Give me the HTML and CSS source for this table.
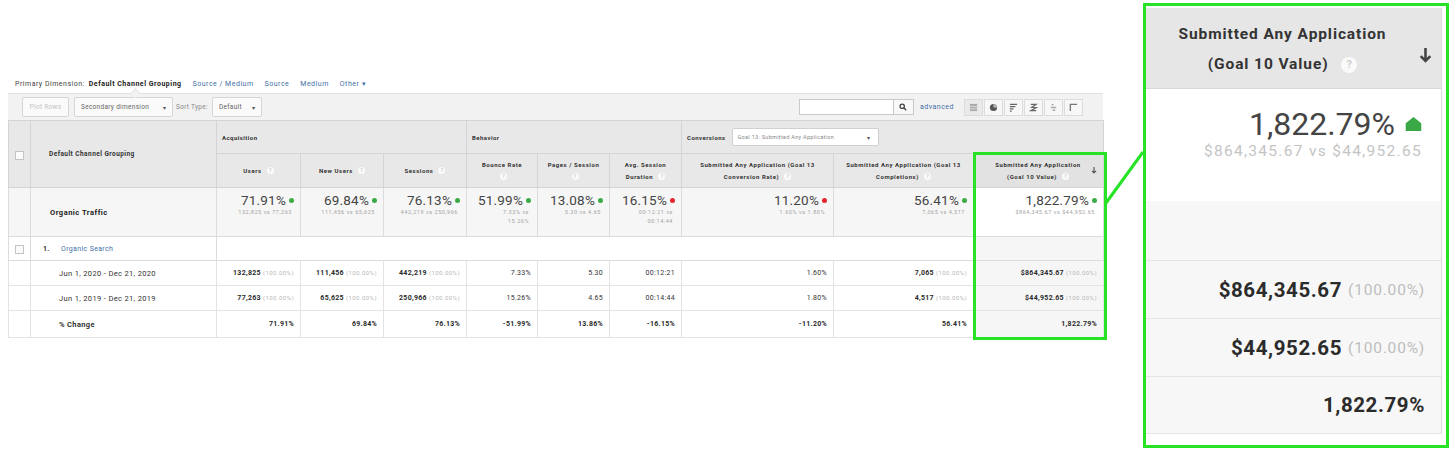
FILE: index.html
```html
<!DOCTYPE html>
<html lang="en">
<head>
<meta charset="utf-8">
<title>Report</title>
<link rel="stylesheet" href="styles.css">
</head>
<body>
<div class="stage">
  <div class="ga">
    <div class="dimbar">
      <span class="lbl">Primary Dimension:</span>
      <b class="cur">Default Channel Grouping</b>
      <a>Source / Medium</a>
      <a>Source</a>
      <a>Medium</a>
      <a>Other ▾</a>
    </div>
    <div class="toolbar">
      <span class="btn dis">Plot Rows</span>
      <span class="btn sec">Secondary dimension <i class="car">▾</i></span>
      <span class="sortlbl">Sort Type:</span>
      <span class="btn def">Default <i class="car">▾</i></span>
      <span class="spacer"></span>
      <span class="search"></span>
      <span class="sbtn"><svg viewBox="0 0 10 10" width="8" height="8"><circle cx="4" cy="4" r="2.7" fill="none" stroke="#444" stroke-width="1.6"/><path d="M6 6l3 3" stroke="#444" stroke-width="1.8"/></svg></span>
      <a class="adv">advanced</a>
      <span class="views">
        <span class="v on"><svg viewBox="0 0 10 10" width="9" height="9"><rect x="1" y="1" width="8" height="8" fill="#aaa"/><path d="M1 4h8M1 6.5h8" stroke="#eee" stroke-width=".8"/></svg></span>
        <span class="v"><svg viewBox="0 0 10 10" width="9" height="9"><circle cx="5" cy="5" r="4" fill="#555"/><path d="M5 5V1A4 4 0 0 1 9 5Z" fill="#bbb"/></svg></span>
        <span class="v"><svg viewBox="0 0 10 10" width="9" height="9"><path d="M1 1.5h8M1 4h6M1 6.5h4M1 9h2" stroke="#666" stroke-width="1.6"/></svg></span>
        <span class="v"><svg viewBox="0 0 10 10" width="9" height="9"><path d="M2 1.5h6L3 5h5L2 8.5h6" stroke="#666" stroke-width="1.3" fill="none"/></svg></span>
        <span class="v"><svg viewBox="0 0 10 10" width="9" height="9"><path d="M3 2h2M2 5h6M4 8h3" stroke="#aaa" stroke-width="1.6"/></svg></span>
        <span class="v"><svg viewBox="0 0 10 10" width="9" height="9"><path d="M1 1.5h8M1.5 1v8" stroke="#777" stroke-width="1.5"/></svg></span>
      </span>
    </div>
    <table class="report">
      <colgroup>
        <col class="w-cb"><col class="w-dim"><col class="w-84"><col class="w-83"><col class="w-83"><col class="w-71"><col class="w-72"><col class="w-72"><col class="w-152"><col class="w-140"><col class="w-130">
      </colgroup>
      <thead>
        <tr class="h1">
          <th class="cb" rowspan="2"><span class="chk"></span></th>
          <th class="dimh" rowspan="2">Default Channel Grouping</th>
          <th class="grp" colspan="3">Acquisition</th>
          <th class="grp" colspan="3">Behavior</th>
          <th class="grp conv" colspan="3"><div class="convwrap"><span>Conversions</span><span class="goalsel">Goal 13: Submitted Any Application<i class="car">▾</i></span></div></th>
        </tr>
        <tr class="h2">
          <th class="mh">Users <span class="help">?</span></th>
          <th class="mh">New Users <span class="help">?</span></th>
          <th class="mh">Sessions <span class="help">?</span></th>
          <th class="mh">Bounce Rate<br><span class="help">?</span></th>
          <th class="mh">Pages / Session<br><span class="help">?</span></th>
          <th class="mh">Avg. Session<br>Duration <span class="help">?</span></th>
          <th class="mh">Submitted Any Application (Goal 13<br>Conversion Rate) <span class="help">?</span></th>
          <th class="mh">Submitted Any Application (Goal 13<br>Completions) <span class="help">?</span></th>
          <th class="mh srt"><div class="srtwrap"><span>Submitted Any Application<br>(Goal 10 Value) <span class="help">?</span></span><svg class="sarr" viewBox="0 0 10 12" width="6" height="7"><path d="M5 0v10M1.5 6.5L5 10l3.5-3.5" stroke="#555" stroke-width="2" fill="none"/></svg></div></th>
        </tr>
      </thead>
      <tbody>
        <tr class="tot">
          <td class="cb"></td>
          <td class="tname">Organic Traffic</td>
          <td class="num"><div class="big">71.91%<span class="dot g"></span></div><div class="sub">132,825 vs 77,263</div></td>
          <td class="num"><div class="big">69.84%<span class="dot g"></span></div><div class="sub">111,456 vs 65,625</div></td>
          <td class="num"><div class="big">76.13%<span class="dot g"></span></div><div class="sub">442,219 vs 250,966</div></td>
          <td class="num"><div class="big">51.99%<span class="dot g"></span></div><div class="sub">7.33% vs<br>15.26%</div></td>
          <td class="num"><div class="big">13.08%<span class="dot g"></span></div><div class="sub">5.30 vs 4.65</div></td>
          <td class="num"><div class="big">16.15%<span class="dot r"></span></div><div class="sub">00:12:21 vs<br>00:14:44</div></td>
          <td class="num"><div class="big">11.20%<span class="dot r"></span></div><div class="sub">1.60% vs 1.80%</div></td>
          <td class="num"><div class="big">56.41%<span class="dot g"></span></div><div class="sub">7,065 vs 4,517</div></td>
          <td class="num srt"><div class="big">1,822.79%<span class="dot g"></span></div><div class="sub">$864,345.67 vs $44,952.65</div></td>
        </tr>
        <tr class="grprow">
          <td class="cb"><span class="chk"></span></td>
          <td class="gname"><span class="idx">1.</span><a>Organic Search</a></td>
          <td class="blank" colspan="8"></td>
          <td class="srt"></td>
        </tr>
        <tr class="drow">
          <td class="cb"></td>
          <td class="date">Jun 1, 2020 - Dec 21, 2020</td>
          <td class="val"><b>132,825</b> <span class="pc">(100.00%)</span></td>
          <td class="val"><b>111,456</b> <span class="pc">(100.00%)</span></td>
          <td class="val"><b>442,219</b> <span class="pc">(100.00%)</span></td>
          <td class="val">7.33%</td>
          <td class="val">5.30</td>
          <td class="val">00:12:21</td>
          <td class="val">1.60%</td>
          <td class="val"><b>7,065</b> <span class="pc">(100.00%)</span></td>
          <td class="val srt"><b>$864,345.67</b> <span class="pc">(100.00%)</span></td>
        </tr>
        <tr class="drow">
          <td class="cb"></td>
          <td class="date">Jun 1, 2019 - Dec 21, 2019</td>
          <td class="val"><b>77,263</b> <span class="pc">(100.00%)</span></td>
          <td class="val"><b>65,625</b> <span class="pc">(100.00%)</span></td>
          <td class="val"><b>250,966</b> <span class="pc">(100.00%)</span></td>
          <td class="val">15.26%</td>
          <td class="val">4.65</td>
          <td class="val">00:14:44</td>
          <td class="val">1.80%</td>
          <td class="val"><b>4,517</b> <span class="pc">(100.00%)</span></td>
          <td class="val srt"><b>$44,952.65</b> <span class="pc">(100.00%)</span></td>
        </tr>
        <tr class="drow last">
          <td class="cb"></td>
          <td class="date chg">% Change</td>
          <td class="val"><b>71.91%</b></td>
          <td class="val"><b>69.84%</b></td>
          <td class="val"><b>76.13%</b></td>
          <td class="val"><b>-51.99%</b></td>
          <td class="val"><b>13.86%</b></td>
          <td class="val"><b>-16.15%</b></td>
          <td class="val"><b>-11.20%</b></td>
          <td class="val"><b>56.41%</b></td>
          <td class="val srt"><b>1,822.79%</b></td>
        </tr>
      </tbody>
    </table>
  </div>

  <div class="zoombox">
    <div class="zcol">
      <div class="zhead">
        <div class="zlabel">Submitted Any Application<br>(Goal 10 Value) <span class="zhelp">?</span></div>
        <svg class="zarrow" viewBox="0 0 12 14" width="13" height="15"><path d="M6 0v12M1.5 7.5L6 12l4.5-4.5" stroke="#444" stroke-width="2.4" fill="none"/></svg>
      </div>
      <div class="ztot">
        <div class="zbig">1,822.79%<svg class="zup" viewBox="0 0 10 9" width="17" height="14"><path d="M5 0L10 4V9H0V4Z" fill="#3aa845"/></svg></div>
        <div class="zsub">$864,345.67 vs $44,952.65</div>
      </div>
      <div class="zrow zempty"></div>
      <div class="zrow"><b>$864,345.67</b> <span class="zpc">(100.00%)</span></div>
      <div class="zrow"><b>$44,952.65</b> <span class="zpc">(100.00%)</span></div>
      <div class="zrow"><b>1,822.79%</b></div>
    </div>
  </div>

  <svg class="annot" viewBox="0 0 1454 452" width="1454" height="452">
    <rect x="974.5" y="153.5" width="131" height="185" fill="none" stroke="#26e326" stroke-width="3"/>
    <path d="M1106 203L1143 152" stroke="#26e326" stroke-width="3"/>
  </svg>
</div>
</body>
</html>
```

FILE: styles.css
```css
* { box-sizing: border-box; }
html, body { margin: 0; padding: 0; background: #fff; }
body {
  width: 1454px;
  height: 452px;
  overflow: hidden;
  font-family: Roboto, "Liberation Sans", Arial, sans-serif;
  color: #333;
}
a { color: #3f6fa6; text-decoration: none; }

.stage {
  position: relative;
  display: flex;
  align-items: flex-start;
  height: 452px;
}

/* ---------- Analytics panel ---------- */
.ga {
  width: 1095px;
  margin: 75px 0 0 8px;
  flex: none;
}

.dimbar {
  height: 18px;
  display: flex;
  align-items: center;
  gap: 11px;
  padding-left: 7px;
  font-size: 7px;
  letter-spacing: .5px;
  white-space: nowrap;
}
.dimbar .lbl { color: #444; margin-right: -7px; }
.dimbar .cur { color: #222; font-weight: 700; letter-spacing: .5px; }

.toolbar {
  position: relative;
  height: 27px;
  background: #f2f2f2;
  border-top: 1px solid #e2e2e2;
  display: flex;
  align-items: center;
  padding: 0 20px 0 14px;
  font-size: 6.5px;
  letter-spacing: .3px;
  color: #666;
}
.toolbar::before {
  content: "";
  position: absolute;
  top: -4px;
  left: 124px;
  width: 6px;
  height: 6px;
  background: #f2f2f2;
  border-top: 1px solid #e2e2e2;
  border-left: 1px solid #e2e2e2;
  transform: rotate(45deg);
}
.btn {
  height: 20px;
  display: flex;
  align-items: center;
  border: 1px solid #d6d6d6;
  border-radius: 2px;
  background: #fafafa;
  padding: 0 6px;
  white-space: nowrap;
}
.btn.dis { width: 47px; color: #c4c4c4; justify-content: center; }
.btn.sec { width: 99px; margin-left: 5px; justify-content: space-between; }
.btn.def { width: 50px; margin-left: 4px; justify-content: space-between; }
.car { font-style: normal; font-size: 6px; color: #555; }
.sortlbl { margin-left: 3px; color: #888; }
.spacer { flex: 1; }
.search {
  width: 95px;
  height: 16px;
  background: #fff;
  border: 1px solid #c9c9c9;
}
.sbtn {
  width: 20px;
  height: 16px;
  border: 1px solid #c9c9c9;
  border-left: none;
  background: #f8f8f8;
  display: flex;
  align-items: center;
  justify-content: center;
}
.adv { margin-left: 6px; font-size: 7px; letter-spacing: .5px; }
.views {
  display: flex;
  margin-left: 10px;
  gap: 1px;
}
.v {
  width: 19px;
  height: 17px;
  display: flex;
  align-items: center;
  justify-content: center;
  background: #f7f7f7;
  border: 1px solid #dcdcdc;
}
.v.on { background: #eaeaea; }

/* ---------- Table ---------- */
.report {
  width: 1095px;
  border-collapse: collapse;
  table-layout: fixed;
}
.w-cb { width: 22px; }
.w-dim { width: 186px; }
.w-84 { width: 84px; }
.w-83 { width: 83px; }
.w-71 { width: 71px; }
.w-72 { width: 72px; }
.w-152 { width: 152px; }
.w-140 { width: 140px; }
.w-130 { width: 130px; }

.report th, .report td {
  border: 1px solid #dcdcdc;
  padding: 0;
}
.report thead th {
  background: #e8e8e8;
  color: #333;
  font-weight: 700;
  border-color: #d4d4d4;
}
.h1 th { height: 33px; }
.h2 th { height: 34px; }
.cb { text-align: center; }
.chk {
  display: inline-block;
  width: 9px;
  height: 9px;
  border: 1px solid #c4c4c4;
  background: #fbfbfb;
  vertical-align: middle;
}
.dimh {
  text-align: left;
  padding-left: 18px !important;
  font-size: 6.5px;
  letter-spacing: .45px;
}
.grp {
  text-align: left;
  padding-left: 5px !important;
  font-size: 6px;
  letter-spacing: .45px;
}
.convwrap { display: flex; align-items: center; gap: 6px; }
.goalsel {
  width: 147px;
  height: 18px;
  background: #fff;
  border: 1px solid #d0d0d0;
  border-radius: 2px;
  display: flex;
  align-items: center;
  justify-content: space-between;
  padding: 0 7px 0 5px;
  font-weight: 400;
  color: #888;
  font-size: 5.5px;
  letter-spacing: .3px;
}
.mh {
  text-align: center;
  font-size: 6px;
  letter-spacing: .55px;
  line-height: 12px;
  padding: 0 3px !important;
}
.help {
  display: inline-block;
  width: 7px;
  height: 7px;
  border-radius: 50%;
  background: #fafafa;
  color: #ccc;
  font-size: 5px;
  line-height: 7px;
  text-align: center;
  letter-spacing: 0;
  vertical-align: middle;
  margin-left: 3px;
}
.report thead th.srt { background: #e2e2e2; }
.srtwrap { display: flex; align-items: center; justify-content: space-between; padding-left: 10px; padding-right: 3px; }
.srtwrap > span { flex: 1; text-align: center; }
.sarr { flex: none; margin-left: 2px; }

/* totals */
.tot td { height: 49px; background: #f6f6f6; vertical-align: top; }
.tot td.srt { background: #fff; }
.tname {
  vertical-align: middle !important;
  padding-left: 19px !important;
  font-weight: 700;
  font-size: 7.5px;
  letter-spacing: .5px;
  color: #222;
}
.num { text-align: right; padding: 6px 6px 0 4px !important; }
.big {
  font-size: 13.5px;
  line-height: 13px;
  color: #444;
  letter-spacing: .2px;
  white-space: nowrap;
}
.dot {
  display: inline-block;
  width: 5px;
  height: 5px;
  border-radius: 50%;
  margin-left: 3px;
  vertical-align: 2px;
}
.dot.g { background: #3daa46; }
.dot.r { background: #e3262c; }
.sub {
  margin-top: 1px;
  padding-right: 2px;
  font-size: 5.5px;
  line-height: 9px;
  color: #a4a4a4;
  letter-spacing: .55px;
  white-space: nowrap;
}

/* group row */
.grprow td { height: 24px; background: #fff; }
.grprow td.blank { border-left: none; border-right: none; }
.grprow td.srt { background: #f6f6f6; border-left: none; }
.gname {
  padding-left: 12px !important;
  font-size: 7px;
  letter-spacing: .35px;
}
.idx { display: inline-block; width: 18px; color: #333; font-weight: 700; }

/* data rows */
.drow td { height: 25px; background: #fff; border-color: #e3e3e3; }
.drow.last td { height: 27px; }
.drow td.srt { background: #f6f6f6; }
.date {
  padding-left: 28px !important;
  font-size: 7.5px;
  letter-spacing: .35px;
  color: #333;
}
.chg { font-weight: 700; }
.val {
  text-align: right;
  padding-right: 6px !important;
  font-size: 7px;
  letter-spacing: .3px;
  color: #333;
  white-space: nowrap;
}
.val b { color: #2a2a2a; }
.pc { color: #b8b8b8; font-size: 6px; letter-spacing: .45px; }

/* ---------- Zoomed column ---------- */
.zoombox {
  flex: none;
  width: 306px;
  height: 445px;
  margin: 3px 0 0 40px;
  border: 3px solid #26e326;
  padding: 2px 4px 0 0;
  background: #fff;
}
.zcol {
  width: 296px;
  border-right: 1px solid #dcdcdc;
  background: #f7f7f7;
}
.zhead {
  height: 81px;
  background: #e6e6e6;
  border-bottom: 1px solid #d8d8d8;
  display: flex;
  align-items: flex-start;
  padding: 11px 9px 0 0;
}
.zlabel {
  flex: 1;
  text-align: center;
  font-weight: 700;
  font-size: 15.5px;
  line-height: 30px;
  letter-spacing: .9px;
  color: #333;
}
.zhelp {
  display: inline-block;
  width: 16px;
  height: 16px;
  border-radius: 50%;
  background: #fafafa;
  color: #cfcfcf;
  font-size: 11px;
  line-height: 16px;
  text-align: center;
  vertical-align: 1px;
  margin-left: 8px;
  letter-spacing: 0;
}
.zarrow { flex: none; margin-top: 29px; }

.ztot {
  height: 112px;
  background: #fff;
  text-align: right;
  padding: 17px 19px 0 0;
}
.zbig {
  font-size: 32px;
  line-height: 36px;
  color: #444;
  white-space: nowrap;
}
.zup { margin-left: 10px; vertical-align: 4px; }
.zsub {
  font-size: 15.5px;
  line-height: 18px;
  color: #c4c4c4;
  letter-spacing: 1.3px;
  white-space: nowrap;
}
.zrow {
  height: 58px;
  border-top: 1px solid #e5e5e5;
  display: flex;
  align-items: center;
  justify-content: flex-end;
  gap: 6px;
  padding-right: 16px;
  white-space: nowrap;
}
.zrow.zempty { height: 59px; border-top: none; }
.zrow b {
  font-size: 20.5px;
  color: #2b2b2b;
  letter-spacing: .6px;
}
.zpc {
  font-size: 15.5px;
  color: #bdbdbd;
  letter-spacing: .8px;
}
.zrow:last-child { border-bottom: 1px solid #e5e5e5; }

/* ---------- Annotation overlay ---------- */
.annot {
  position: absolute;
  left: 0;
  top: 0;
  pointer-events: none;
}
```
